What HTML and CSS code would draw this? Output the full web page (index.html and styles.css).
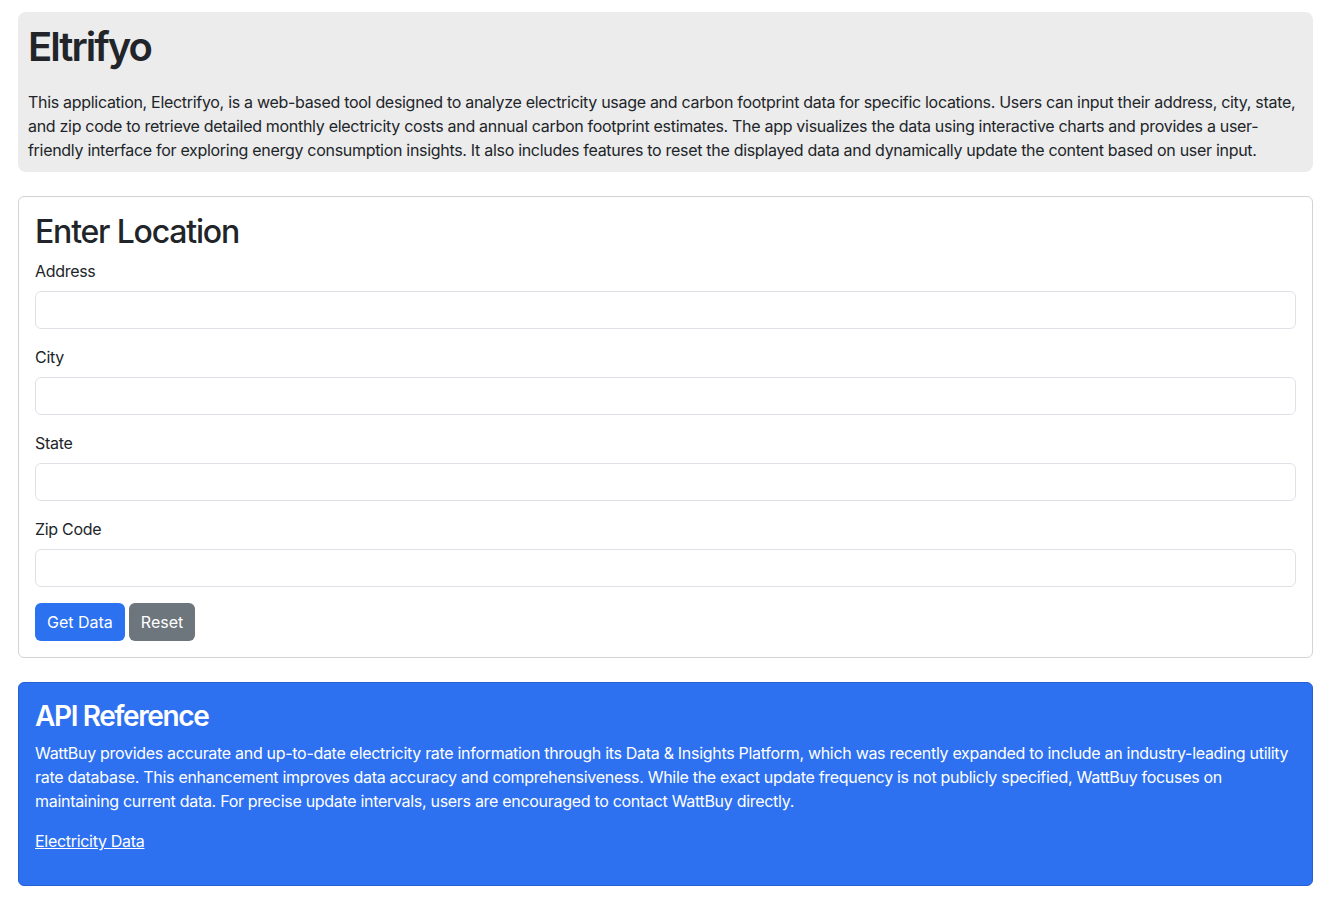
FILE: index.html
```html
<!DOCTYPE html>
<html lang="en">
<head>
<meta charset="utf-8">
<title>Eltrifyo</title>
<link rel="stylesheet" href="styles.css">
</head>
<body>
<div class="page">
  <header class="intro">
    <h1 class="intro-title">Eltrifyo</h1>
    <p class="intro-text">This application, Electrifyo, is a web-based tool designed to analyze electricity usage and carbon footprint data for specific locations. Users can input their address, city, state, and zip code to retrieve detailed monthly electricity costs and annual carbon footprint estimates. The app visualizes the data using interactive charts and provides a user-friendly interface for exploring energy consumption insights. It also includes features to reset the displayed data and dynamically update the content based on user input.</p>
  </header>

  <section class="card">
    <h2 class="card-title">Enter Location</h2>
    <form class="form">
      <div class="field">
        <label class="label" for="address">Address</label>
        <input class="input" id="address" type="text">
      </div>
      <div class="field">
        <label class="label" for="city">City</label>
        <input class="input" id="city" type="text">
      </div>
      <div class="field">
        <label class="label" for="state">State</label>
        <input class="input" id="state" type="text">
      </div>
      <div class="field">
        <label class="label" for="zip">Zip Code</label>
        <input class="input" id="zip" type="text">
      </div>
      <div class="actions">
        <button type="button" class="btn btn-primary">Get Data</button>
        <button type="button" class="btn btn-secondary">Reset</button>
      </div>
    </form>
  </section>

  <section class="card card-blue">
    <h3 class="api-title">API Reference</h3>
    <p class="api-text">WattBuy provides accurate and up-to-date electricity rate information through its Data &amp; Insights Platform, which was recently expanded to include an industry-leading utility rate database. This enhancement improves data accuracy and comprehensiveness. While the exact update frequency is not publicly specified, WattBuy focuses on maintaining current data. For precise update intervals, users are encouraged to contact WattBuy directly.</p>
    <p class="api-text"><a class="api-link" href="#">Electricity Data</a></p>
  </section>
</div>
</body>
</html>
```
FILE: styles.css
```css
* { box-sizing: border-box; }

html, body {
  margin: 0;
  padding: 0;
  background: #fff;
}

body {
  font-family: Inter, "Noto Sans", "Liberation Sans", sans-serif;
  font-size: 16px;
  line-height: 24px;
  letter-spacing: -0.3px;
  color: #212529;
}

.page {
  width: 1295px;
  margin: 12px 0 0 18px;
  display: flex;
  flex-direction: column;
  gap: 24px;
}

.intro {
  background: #ececec;
  border-radius: 8px;
  padding: 11px 10px 10px;
}

.intro-title {
  margin: 0 0 19px;
  font-size: 40px;
  line-height: 48px;
  font-weight: 600;
  letter-spacing: -2px;
}

.intro-text {
  margin: 0;
}

.card {
  border: 1px solid #d3d3d3;
  border-radius: 6px;
  padding: 16px;
  background: #fff;
}

.card-title {
  margin: 0 0 8px;
  font-size: 32px;
  line-height: 38px;
  font-weight: 500;
  letter-spacing: -1.2px;
}

.form {
  display: flex;
  flex-direction: column;
  gap: 16px;
}

.field {
  display: flex;
  flex-direction: column;
  gap: 8px;
}

.label {
  font-size: 16px;
  line-height: 24px;
}

.input {
  display: block;
  width: 100%;
  height: 38px;
  border: 1px solid #dee2e6;
  border-radius: 6px;
  padding: 6px 12px;
  font: inherit;
  background: #fff;
}

.actions {
  display: flex;
  gap: 4px;
}

.btn {
  font: inherit;
  font-size: 16px;
  line-height: 24px;
  letter-spacing: 0;
  padding: 7px 12px;
  border: 0;
  border-radius: 6px;
  color: #fff;
  cursor: pointer;
}

.btn-primary { background: #2c71f0; }
.btn-secondary { background: #6d757d; }

.card-blue {
  background: #2d71f1;
  border-color: #255fd0;
  color: #fff;
}

.api-title {
  margin: 0 0 8px;
  font-size: 28px;
  line-height: 34px;
  font-weight: 600;
  letter-spacing: -1.4px;
}

.api-text {
  margin: 0 0 16px;
}

.api-link {
  color: #fff;
  text-decoration: underline;
}
```
